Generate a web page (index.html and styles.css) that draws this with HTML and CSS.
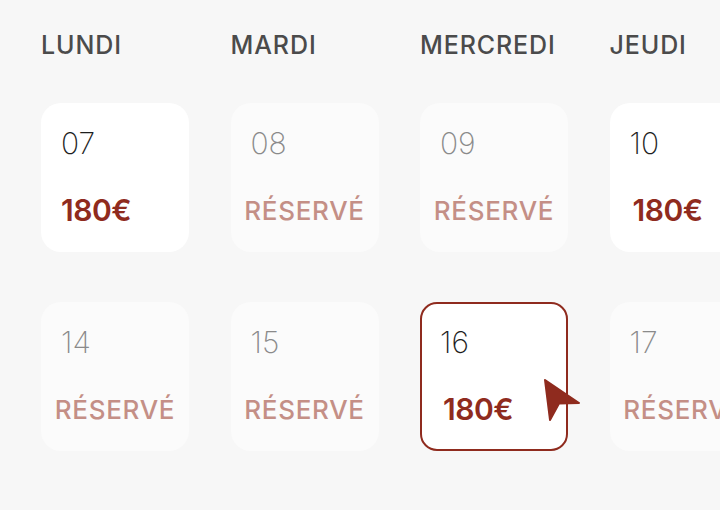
FILE: index.html
```html
<!DOCTYPE html>
<html lang="fr">
<head>
<meta charset="utf-8">
<title>Calendrier</title>
<link rel="stylesheet" href="styles.css">
</head>
<body>
<div class="page">
  <div class="days">
    <div class="day">LUNDI</div>
    <div class="day">MARDI</div>
    <div class="day">MERCREDI</div>
    <div class="day">JEUDI</div>
  </div>
  <div class="grid">
    <div class="card free"><div class="num">07</div><div class="price">180€</div></div>
    <div class="card booked"><div class="num">08</div><div class="status">RÉSERVÉ</div></div>
    <div class="card booked"><div class="num">09</div><div class="status">RÉSERVÉ</div></div>
    <div class="card free"><div class="num">10</div><div class="price shift">180€</div></div>
    <div class="card booked"><div class="num">14</div><div class="status">RÉSERVÉ</div></div>
    <div class="card booked"><div class="num">15</div><div class="status">RÉSERVÉ</div></div>
    <div class="card free selected"><div class="num">16</div><div class="price shift">180€</div>
      <svg class="cursor" width="40" height="44" viewBox="0 0 40 44"><path d="M3 3 L37 26 L17 26.5 L8 43 Z" fill="#8f2b1e" stroke="#8f2b1e" stroke-width="2" stroke-linejoin="round"/></svg>
    </div>
    <div class="card booked"><div class="num">17</div><div class="status">RÉSERVÉ</div></div>
  </div>
</div>
</body>
</html>
```
FILE: styles.css
```css
html, body {
  margin: 0;
  padding: 0;
  background: #f7f7f7;
  width: 720px;
  height: 510px;
  overflow: hidden;
  font-family: "Inter", "Lato", sans-serif;
}
.page {
  padding: 29px 0 0 41px;
}
.days, .grid {
  display: grid;
  grid-template-columns: repeat(4, 148px);
  column-gap: 41.5px;
}
.day {
  font-size: 25px;
  font-weight: 500;
  color: #4b4b4b;
  letter-spacing: 0.9px;
  line-height: 32px;
  white-space: nowrap;
}
.grid {
  margin-top: 42px;
  row-gap: 50px;
}
.card {
  position: relative;
  height: 149px;
  box-sizing: border-box;
  border-radius: 20px;
  padding: 20px 0 0 20px;
  display: flex;
  flex-direction: column;
}
.free { background: #ffffff; }
.booked { background: #fbfbfb; }
.selected {
  border: 2px solid #8f2b1e;
  border-radius: 17px;
  padding: 18px 0 0 18px;
}
.num {
  font-size: 30px;
  font-weight: 200;
  line-height: 40px;
  color: #1e1e1e;
}
.booked .num { color: #8a8a8a; }
.price {
  margin-top: 29px;
  font-size: 30px;
  font-weight: 600;
  color: #8f2b1e;
  line-height: 36px;
  letter-spacing: -0.5px;
}
.price.shift { padding-left: 3px; }
.status {
  margin-top: 30px;
  margin-left: -20px;
  text-align: center;
  font-size: 26px;
  font-weight: 500;
  letter-spacing: 0.7px;
  line-height: 36px;
  color: #c48f86;
  white-space: nowrap;
}
.cursor {
  position: absolute;
  left: 120px;
  top: 73px;
}
```
